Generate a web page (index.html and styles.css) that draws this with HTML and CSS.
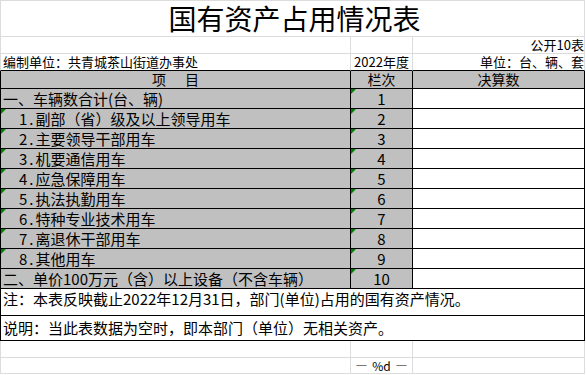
FILE: index.html
```html
<!DOCTYPE html>
<html lang="zh-CN">
<head>
<meta charset="utf-8">
<title>国有资产占用情况表</title>
<link rel="stylesheet" href="styles.css">
</head>
<body>
<div class="sheet">
  <div class="c first span3 title">国有资产占用情况表</div>

  <div class="c first"></div>
  <div class="c"></div>
  <div class="c small right">公开10表</div>

  <div class="c first small bb left">编制单位：共青城茶山街道办事处</div>
  <div class="c small bb center">2022年度</div>
  <div class="c small bb right">单位：台、辆、套</div>

  <div class="c first k g hd center">项<span class="sp"></span>目</div>
  <div class="c k g hd center">栏次</div>
  <div class="c k g hd center">决算数</div>

  <div class="c first k g data left">一、车辆数合计(台、辆)</div>
  <div class="c k g data center tri">1</div>
  <div class="c k data"></div>

  <div class="c first k g data indent tri"><span class="num">1.</span>副部（省）级及以上领导用车</div>
  <div class="c k g data center tri">2</div>
  <div class="c k data"></div>

  <div class="c first k g data indent tri"><span class="num">2.</span>主要领导干部用车</div>
  <div class="c k g data center tri">3</div>
  <div class="c k data"></div>

  <div class="c first k g data indent tri"><span class="num">3.</span>机要通信用车</div>
  <div class="c k g data center tri">4</div>
  <div class="c k data"></div>

  <div class="c first k g data indent tri"><span class="num">4.</span>应急保障用车</div>
  <div class="c k g data center tri">5</div>
  <div class="c k data"></div>

  <div class="c first k g data indent tri"><span class="num">5.</span>执法执勤用车</div>
  <div class="c k g data center tri">6</div>
  <div class="c k data"></div>

  <div class="c first k g data indent tri"><span class="num">6.</span>特种专业技术用车</div>
  <div class="c k g data center tri">7</div>
  <div class="c k data"></div>

  <div class="c first k g data indent tri"><span class="num">7.</span>离退休干部用车</div>
  <div class="c k g data center tri">8</div>
  <div class="c k data"></div>

  <div class="c first k g data indent tri"><span class="num">8.</span>其他用车</div>
  <div class="c k g data center tri">9</div>
  <div class="c k data"></div>

  <div class="c first k g data left">二、单价100万元（含）以上设备（不含车辆）</div>
  <div class="c k g data center tri">10</div>
  <div class="c k data"></div>

  <div class="c first k span3 note left">注：本表反映截止2022年12月31日，部门(单位)占用的国有资产情况。</div>
  <div class="c first k span3 expl left">说明：当此表数据为空时，即本部门（单位）无相关资产。</div>

  <div class="c first"></div>
  <div class="c"></div>
  <div class="c"></div>

  <div class="c first"></div>
  <div class="c foot center">— %d —</div>
  <div class="c"></div>
</div>
</body>
</html>
```

FILE: styles.css
```css
html, body {
  margin: 0;
  padding: 0;
  background: #ffffff;
}

body {
  font-family: "Noto Sans CJK SC", "Noto Sans", sans-serif;
  color: #000000;
}

.sheet {
  display: grid;
  grid-template-columns: 351px 62px 172px;
  grid-template-rows: 36px 17px 17px 18px repeat(10, 20px) 27px 25px 17px 16px;
  border-top: 1px solid #dcdcdc;
  width: 585px;
}

.c {
  box-sizing: border-box;
  border-right: 1px solid #dcdcdc;
  border-bottom: 1px solid #dcdcdc;
  display: flex;
  align-items: flex-start;
  white-space: nowrap;
  min-width: 0;
  position: relative;
}

.first {
  border-left: 1px solid #dcdcdc;
}

.k {
  border-color: #000000;
}

.bb {
  border-bottom-color: #000000;
}

.g {
  background: #c0c0c0;
}

.span3 {
  grid-column: 1 / 4;
}

.left {
  justify-content: flex-start;
  padding-left: 2px;
}

.indent {
  justify-content: flex-start;
  padding-left: 18px;
}

.num {
  letter-spacing: 2px;
}

.center {
  justify-content: center;
}

.right {
  justify-content: flex-end;
}

.title {
  justify-content: center;
  align-items: flex-end;
  font-size: 28px;
  line-height: 33px;
  padding-left: 4px;
  padding-bottom: 1px;
}

.small {
  font-size: 13px;
  line-height: 16px;
}

.hd {
  font-size: 14px;
  line-height: 17px;
}

.sp {
  display: inline-block;
  width: 19px;
}

.data {
  font-size: 15px;
  line-height: 19px;
}

.note {
  font-size: 15px;
  line-height: 20px;
}

.expl {
  font-size: 15px;
  line-height: 24px;
}

.foot {
  font-size: 12px;
  line-height: 15px;
  word-spacing: 2px;
}

.tri::before {
  content: "";
  position: absolute;
  top: 0;
  left: 0;
  width: 0;
  height: 0;
  border-top: 5px solid #008000;
  border-right: 5px solid transparent;
}
```
